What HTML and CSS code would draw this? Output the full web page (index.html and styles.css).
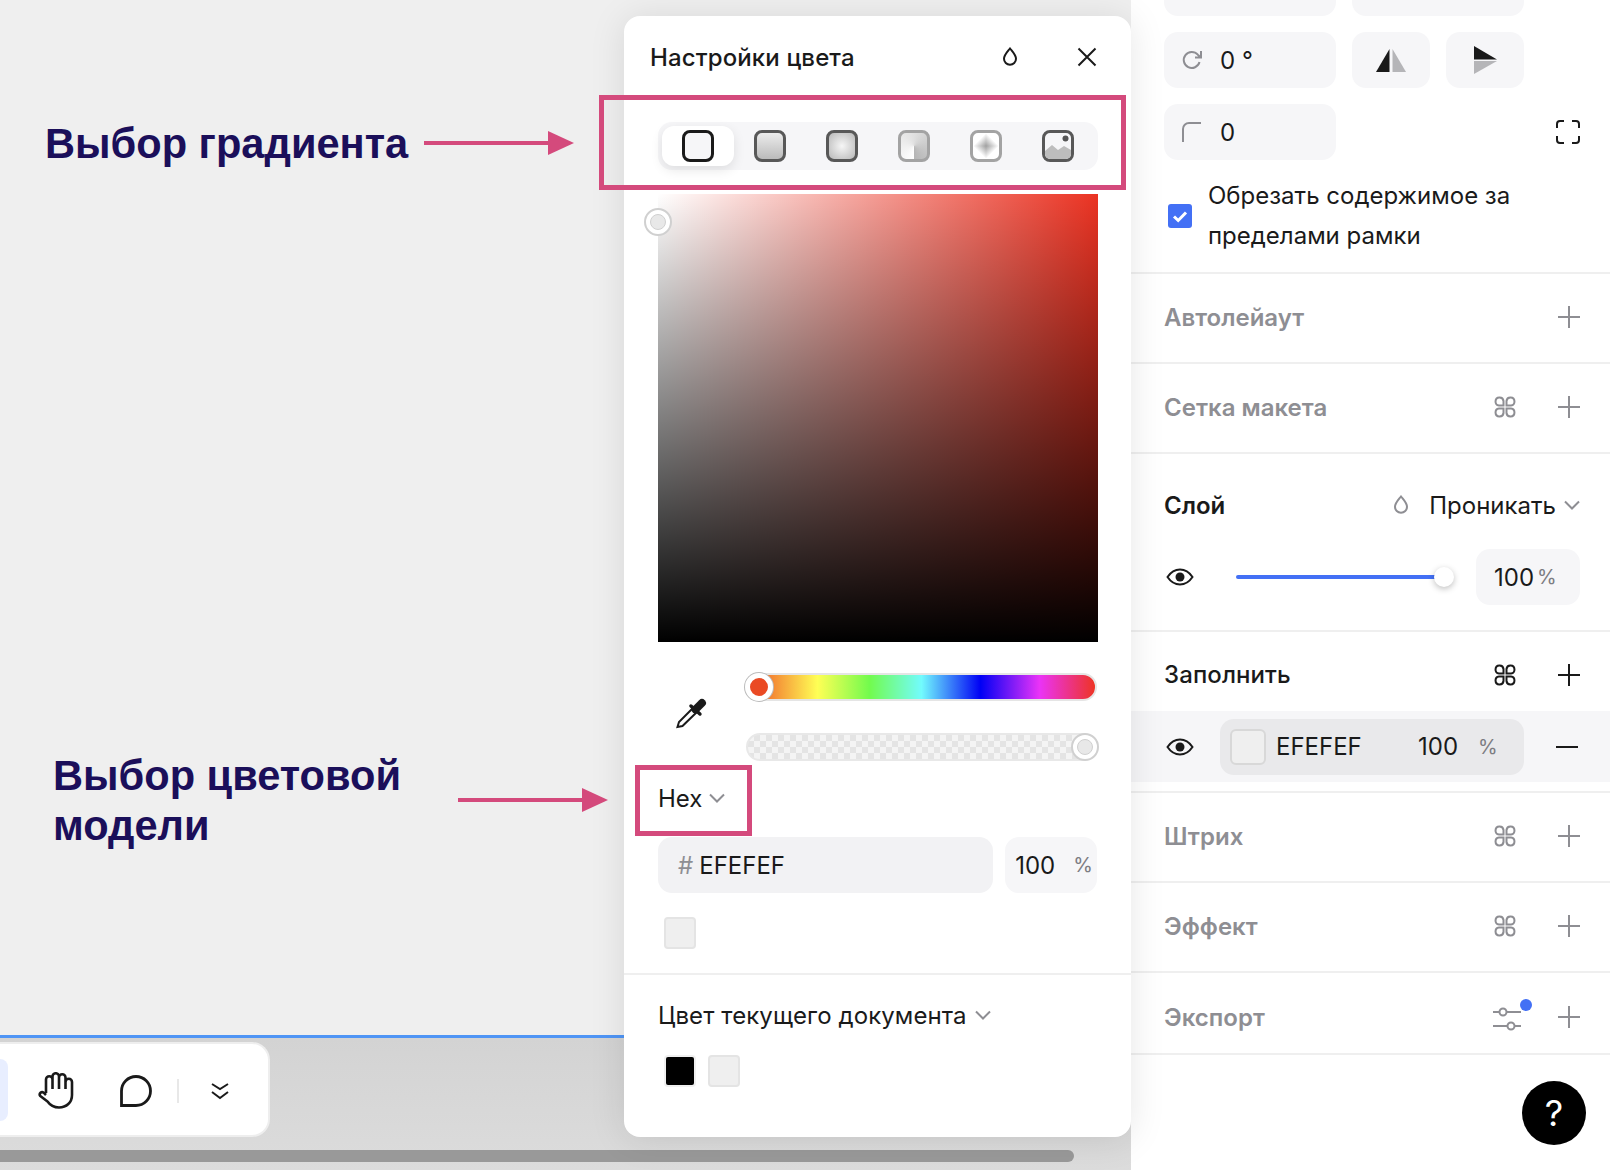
FILE: index.html
```html
<!DOCTYPE html>
<html lang="ru">
<head>
    <meta charset="UTF-8">
    <meta name="viewport" content="width=device-width, initial-scale=1.0">
    <title>Настройки цвета</title>
    <link rel="stylesheet" href="styles.css">
</head>
<body>
    <svg class="icon-defs" width="0" height="0">
        <symbol id="i-plus" viewBox="0 0 22 22"><path d="M11 0v22M0 11h22" fill="none" stroke="currentColor" stroke-width="2"/></symbol>
        <symbol id="i-cmd" viewBox="0 0 22 22"><g fill="none" stroke="currentColor" stroke-width="2"><path d="M9.500 9.500H5a4 4 0 1 1 4.500-4.500z"/><path d="M12.500 9.500H17a4 4 0 1 0-4.500-4.500z"/><path d="M9.500 12.500H5a4 4 0 1 0 4.500 4.500z"/><path d="M12.500 12.500H17a4 4 0 1 1-4.500 4.500z"/></g></symbol>
        <symbol id="i-eye" viewBox="0 0 28 18"><path d="M1.500 9C5 3.800 9 1.500 14 1.500S23 3.800 26.500 9C23 14.200 19 16.500 14 16.500S5 14.200 1.500 9z" fill="none" stroke="currentColor" stroke-width="2"/><circle cx="14" cy="9" r="4.500" fill="currentColor"/></symbol>
        <symbol id="i-chevron" viewBox="0 0 16 10"><path d="M1 1.500l7 7 7-7" fill="none" stroke="currentColor" stroke-width="2"/></symbol>
        <symbol id="i-drop" viewBox="0 0 16 20"><path d="M8 1.500c3 3.800 6 6.600 6 10.300a6 6 0 0 1-12 0C2 8.100 5 5.300 8 1.500z" fill="none" stroke="currentColor" stroke-width="2"/></symbol>
    </svg>

    <div class="stage">
        <div class="canvas-col">
            <div class="canvas"></div>
            <div class="bottom-area">
                <div class="toolbar">
                    <span class="tool-active"></span>
                    <svg class="tool-hand" viewBox="0 0 36 37" width="36" height="37"><path d="M8 21V7.500a3.250 3.250 0 0 1 6.500 0V4.500a3.250 3.250 0 0 1 6.500 0V5.500a3.250 3.250 0 0 1 6.500 0V10a3.250 3.250 0 0 1 6.500 0V23c0 7.500-5.500 12.500-13 12.500-5.500 0-9-2.500-11.500-6L2.300 24c-1.800-2.400 1.200-5 3.400-3.300L8 23M14.500 7.500V17M21 5.500V17M27.500 6V17" fill="none" stroke="#1a1a1a" stroke-width="2.600" stroke-linejoin="round"/></svg>
                    <svg class="tool-comment" viewBox="0 0 32 32" width="32" height="32"><path d="M1.500 30.500V16a14.500 14.500 0 1 1 14.500 14.500z" fill="none" stroke="#1a1a1a" stroke-width="2.800"/></svg>
                    <span class="tool-sep"></span>
                    <svg class="tool-more" viewBox="0 0 20 18" width="20" height="18"><path d="M2 2l8 5 8-5M2 10l8 6 8-6" fill="none" stroke="#1a1a1a" stroke-width="2"/></svg>
                </div>
                <div class="scrollbar"></div>
            </div>
        </div>

        <aside class="sidebar">
            <div class="props">
                <div class="prop-row prop-row-cut">
                    <div class="field field-wide"></div>
                    <div class="field field-wide"></div>
                </div>
                <div class="prop-row">
                    <div class="field field-wide">
                        <svg class="field-icon" viewBox="0 0 22 22" width="22" height="22"><path d="M18.500 13a8 8 0 1 1-1.700-7.300L20 8.500M20 2v6.500h-6" fill="none" stroke="#8e8e93" stroke-width="2"/></svg>
                        <span>0 °</span>
                    </div>
                    <div class="field field-btn">
                        <svg viewBox="0 0 30 24" width="30" height="24"><path d="M13.500 1L0 24h13.500z" fill="#1a1a1a"/><path d="M16.500 1L30 24H16.500z" fill="#b5b5b8"/></svg>
                    </div>
                    <div class="field field-btn">
                        <svg viewBox="0 0 24 30" width="24" height="30"><path d="M1 1l23 13.500H1z" fill="#1a1a1a"/><path d="M1 29l23-13H1z" fill="#b5b5b8"/></svg>
                    </div>
                </div>
                <div class="prop-row prop-row-last">
                    <div class="field field-wide">
                        <svg class="field-icon" viewBox="0 0 22 22" width="22" height="22"><path d="M2 21V8a6 6 0 0 1 6-6h12" fill="none" stroke="#8e8e93" stroke-width="2"/></svg>
                        <span>0</span>
                    </div>
                    <svg class="corners" viewBox="0 0 24 24" width="24" height="24"><path d="M1 8V4a3 3 0 0 1 3-3h4M16 1h4a3 3 0 0 1 3 3v4M23 16v4a3 3 0 0 1-3 3h-4M8 23H4a3 3 0 0 1-3-3v-4" fill="none" stroke="#1a1a1a" stroke-width="2"/></svg>
                </div>
                <div class="clip-row">
                    <span class="checkbox"><svg viewBox="0 0 24 24" width="24" height="24"><path d="M6 12.500l4.200 4L18 8.500" fill="none" stroke="#fff" stroke-width="3"/></svg></span>
                    <span class="clip-text">Обрезать содержимое за пределами рамки</span>
                </div>
            </div>

            <section class="section section-muted section-auto">
                <h4>Автолейаут</h4>
                <div class="section-icons"><svg class="ico-plus"><use href="#i-plus"/></svg></div>
            </section>
            <section class="section section-muted section-grid">
                <h4>Сетка макета</h4>
                <div class="section-icons"><svg class="ico-cmd"><use href="#i-cmd"/></svg><svg class="ico-plus"><use href="#i-plus"/></svg></div>
            </section>

            <section class="layer">
                <div class="layer-head">
                    <h4>Слой</h4>
                    <div class="blend">
                        <svg class="blend-drop"><use href="#i-drop"/></svg>
                        <span>Проникать</span>
                        <svg class="chevron"><use href="#i-chevron"/></svg>
                    </div>
                </div>
                <div class="layer-body">
                    <svg class="ico-eye"><use href="#i-eye"/></svg>
                    <div class="slider"><span class="slider-thumb"></span></div>
                    <div class="field field-opacity">100<small>%</small></div>
                </div>
            </section>

            <section class="fill">
                <div class="fill-head">
                    <h4>Заполнить</h4>
                    <div class="section-icons"><svg class="ico-cmd"><use href="#i-cmd"/></svg><svg class="ico-plus"><use href="#i-plus"/></svg></div>
                </div>
                <div class="fill-row">
                    <svg class="ico-eye"><use href="#i-eye"/></svg>
                    <div class="fill-pill">
                        <span class="fill-swatch"></span>
                        <span class="fill-hex">EFEFEF</span>
                        <span class="fill-num">100</span>
                        <small>%</small>
                    </div>
                    <span class="minus"></span>
                </div>
            </section>

            <section class="section section-muted section-stroke">
                <h4>Штрих</h4>
                <div class="section-icons"><svg class="ico-cmd"><use href="#i-cmd"/></svg><svg class="ico-plus"><use href="#i-plus"/></svg></div>
            </section>
            <section class="section section-muted section-effect">
                <h4>Эффект</h4>
                <div class="section-icons"><svg class="ico-cmd"><use href="#i-cmd"/></svg><svg class="ico-plus"><use href="#i-plus"/></svg></div>
            </section>
            <section class="section section-muted section-export">
                <h4>Экспорт</h4>
                <div class="section-icons">
                    <span class="tune">
                        <svg viewBox="0 0 28 28" width="28" height="28"><g fill="none" stroke="#8e8e93" stroke-width="2"><path d="M0 9h6M14 9h14M0 23h14M22 23h6"/><circle cx="10" cy="9" r="3.500"/><circle cx="18" cy="23" r="3.500"/></g></svg>
                        <span class="tune-dot"></span>
                    </span>
                    <svg class="ico-plus"><use href="#i-plus"/></svg>
                </div>
            </section>
            <div class="help">?</div>
        </aside>
    </div>

    <!-- color popup -->
    <div class="color-panel">
        <div class="panel-head">
            <span>Настройки цвета</span>
            <div class="panel-head-icons">
                <svg class="head-drop"><use href="#i-drop"/></svg>
                <svg viewBox="0 0 20 20" width="20" height="20"><path d="M1.500 1.500l17 17M18.500 1.500l-17 17" fill="none" stroke="#1a1a1a" stroke-width="2"/></svg>
            </div>
        </div>
        <div class="fill-types">
            <span class="fill-type fill-type-on"><i class="ft ft-solid"></i></span>
            <span class="fill-type"><i class="ft ft-linear"></i></span>
            <span class="fill-type"><i class="ft ft-radial"></i></span>
            <span class="fill-type"><i class="ft ft-angular"></i></span>
            <span class="fill-type"><i class="ft ft-diamond"></i></span>
            <span class="fill-type">
                <i class="ft ft-image">
                    <svg viewBox="0 0 26 26" width="26" height="26"><path d="M0 26V18l7-6 6 5 6-4 7 4v9z" fill="#bdbdbd"/><circle cx="20.500" cy="5.500" r="3" fill="#555"/></svg>
                </i>
            </span>
        </div>
        <div class="sv-field"><span class="sv-handle"><i></i></span></div>
        <div class="sliders">
            <svg class="dropper" viewBox="0 0 32 32" width="32" height="32"><path d="M17 11L3 25l-1.500 5 5-1L21 15" fill="none" stroke="#1a1a1a" stroke-width="2"/><path d="M15 9l9 8" stroke="#1a1a1a" stroke-width="3.500" stroke-linecap="round"/><path d="M19.500 12.500L26 6" stroke="#1a1a1a" stroke-width="8" stroke-linecap="round"/></svg>
            <div class="slider-stack">
                <div class="hue"><span class="hue-thumb"></span></div>
                <div class="alpha"><span class="alpha-thumb"><i></i></span></div>
            </div>
        </div>
        <div class="model">Hex <svg class="chevron"><use href="#i-chevron"/></svg></div>
        <div class="hex-row">
            <div class="hex-input"><span class="hash">#</span>EFEFEF</div>
            <div class="hex-alpha">100<small>%</small></div>
        </div>
        <div class="swatches swatches-recent"><span class="swatch swatch-light"></span></div>
        <div class="doc-colors">
            <div class="doc-title">Цвет текущего документа <svg class="chevron"><use href="#i-chevron"/></svg></div>
            <div class="swatches">
                <span class="swatch swatch-black"></span>
                <span class="swatch swatch-light"></span>
            </div>
        </div>
    </div>

    <!-- annotations drawn on top of the screenshot -->
    <div class="note note-gradient">Выбор градиента</div>
    <div class="note note-model">Выбор цветовой<br>модели</div>
    <svg class="arrow arrow-gradient" viewBox="0 0 150 28" width="150" height="28"><path d="M0 14h128" stroke="#d44a7c" stroke-width="4"/><path d="M124 2l26 12-26 12z" fill="#d44a7c"/></svg>
    <svg class="arrow arrow-model" viewBox="0 0 150 28" width="150" height="28"><path d="M0 14h128" stroke="#d44a7c" stroke-width="4"/><path d="M124 2l26 12-26 12z" fill="#d44a7c"/></svg>
    <div class="mark mark-gradient"></div>
    <div class="mark mark-model"></div>
</body>
</html>
```

FILE: styles.css
```css
* {
    margin: 0;
    padding: 0;
    box-sizing: border-box;
}

html, body {
    width: 1610px;
    height: 1170px;
    overflow: hidden;
}

body {
    position: relative;
    font-family: Inter, "Noto Sans", sans-serif;
    font-size: 24px;
    color: #1a1a1a;
    background-color: #efefef;
}

.icon-defs {
    position: absolute;
}

.stage {
    display: flex;
    height: 1170px;
}

/* canvas side */
.canvas-col {
    width: 1131px;
    display: flex;
    flex-direction: column;
}

.canvas {
    height: 1035px;
    background-color: #efefef;
}

.bottom-area {
    flex: 1;
    border-top: 3px solid #4f95f5;
    background: linear-gradient(#d3d3d3, #dcdcdc);
    padding-top: 4px;
}

.toolbar {
    width: 270px;
    height: 95px;
    background-color: white;
    border: 2px solid #eeeeee;
    border-left: 0;
    border-radius: 0 18px 18px 0;
    display: flex;
    align-items: center;
    position: relative;
}

.tool-active {
    width: 8px;
    height: 62px;
    background-color: #e8eeff;
    border-radius: 0 10px 10px 0;
}

.tool-hand {
    margin-left: 30px;
    margin-top: 2px;
}

.tool-comment {
    margin-left: 46px;
    margin-top: 3px;
}

.tool-sep {
    width: 2px;
    height: 24px;
    margin-left: 25px;
    margin-top: 2px;
    background-color: #e8e8e8;
}

.tool-more {
    margin-left: 31px;
    margin-top: 3px;
}

.scrollbar {
    width: 1074px;
    height: 12px;
    margin-top: 13px;
    background-color: #999999;
    border-radius: 0 6px 6px 0;
}

/* right panel */
.sidebar {
    width: 479px;
    background-color: white;
    position: relative;
}

.props {
    padding: 0 30px 0 33px;
    height: 272px;
}

.prop-row {
    display: flex;
    gap: 16px;
    margin-bottom: 16px;
}

.prop-row-cut {
    height: 16px;
    overflow: hidden;
}

.prop-row-cut .field {
    margin-top: -40px;
}

.prop-row-last {
    justify-content: space-between;
    align-items: center;
}

.field {
    height: 56px;
    background-color: #f6f6f8;
    border-radius: 14px;
    display: flex;
    align-items: center;
}

.field-wide {
    width: 172px;
    padding-left: 17px;
    gap: 17px;
}

.field-btn {
    width: 78px;
    justify-content: center;
}

.clip-row {
    display: flex;
    align-items: center;
    gap: 16px;
    padding-left: 4px;
    line-height: 40px;
}

.checkbox {
    flex: none;
    width: 24px;
    height: 24px;
    border-radius: 3px;
    background-color: #4370f5;
    display: flex;
}

.clip-text {
    width: 330px;
}

.section {
    display: flex;
    justify-content: space-between;
    align-items: center;
    padding: 0 30px 2px 33px;
    border-top: 2px solid #efefef;
}

h4 {
    font-size: 24px;
    font-weight: 600;
}

.section-muted {
    color: #8e8e93;
}

.section-auto,
.section-grid,
.section-stroke,
.section-effect {
    height: 90px;
}

.section-export {
    height: 84px;
    padding-top: 8px;
    padding-bottom: 0;
    border-bottom: 2px solid #efefef;
}

.section-icons {
    display: flex;
    align-items: center;
    gap: 42px;
}

.ico-plus {
    width: 22px;
    height: 22px;
}

.ico-cmd {
    width: 22px;
    height: 22px;
}

.ico-eye {
    width: 28px;
    height: 18px;
    color: #1a1a1a;
}

.chevron {
    width: 16px;
    height: 10px;
    color: #8e8e93;
}

.layer {
    height: 178px;
    border-top: 2px solid #efefef;
    padding: 0 30px 0 33px;
}

.layer-head {
    height: 102px;
    display: flex;
    justify-content: space-between;
    align-items: center;
}

.blend {
    display: flex;
    align-items: center;
    font-weight: 400;
}

.blend-drop {
    width: 16px;
    height: 20px;
    color: #8e8e93;
    margin-right: 20px;
}

.blend .chevron {
    margin-left: 8px;
}

.layer-body {
    display: flex;
    align-items: center;
    margin-top: -7px;
}

.layer-body .ico-eye {
    margin-left: 2px;
}

.slider {
    width: 208px;
    height: 4px;
    margin-left: 42px;
    background-color: #4370f5;
    border-radius: 2px;
    position: relative;
}

.slider-thumb {
    position: absolute;
    right: -10px;
    top: -8px;
    width: 20px;
    height: 20px;
    border-radius: 50%;
    background-color: white;
    box-shadow: 0 2px 6px rgba(0, 0, 0, 0.25);
}

.field-opacity {
    width: 104px;
    margin-left: auto;
    padding-left: 18px;
    gap: 3px;
}

small {
    font-size: 20px;
    color: #7c7c82;
}

.fill {
    height: 161px;
    border-top: 2px solid #efefef;
}

.fill-head {
    height: 79px;
    display: flex;
    justify-content: space-between;
    align-items: center;
    padding: 6px 30px 0 33px;
}

.fill-head h4 {
    font-weight: 500;
    letter-spacing: 0.1px;
}

.fill-row {
    height: 71px;
    display: flex;
    align-items: center;
    padding-left: 35px;
    background-color: #f6f6f8;
}

.fill-pill {
    width: 304px;
    height: 56px;
    margin-left: 26px;
    background-color: #e9e9eb;
    border-radius: 14px;
    display: flex;
    align-items: center;
    padding-left: 10px;
}

.fill-swatch {
    width: 36px;
    height: 36px;
    background-color: #efefef;
    border: 2px solid #d8d8d8;
    border-radius: 6px;
}

.fill-hex {
    margin-left: 10px;
    width: 142px;
}

.fill-num {
    width: 60px;
}

.minus {
    width: 22px;
    height: 2px;
    margin-left: 32px;
    background-color: #1a1a1a;
}

.tune {
    position: relative;
    width: 28px;
    height: 28px;
    display: block;
    margin-right: -5px;
}

.tune-dot {
    position: absolute;
    top: -4px;
    right: -11px;
    width: 12px;
    height: 12px;
    border-radius: 50%;
    background-color: #4370f5;
}

.help {
    position: absolute;
    left: 391px;
    top: 1081px;
    width: 64px;
    height: 64px;
    border-radius: 50%;
    background-color: black;
    color: white;
    font-size: 36px;
    font-weight: 400;
    display: flex;
    align-items: center;
    justify-content: center;
}

/* color popup */
.color-panel {
    position: absolute;
    left: 624px;
    top: 16px;
    width: 507px;
    height: 1121px;
    background-color: white;
    border-radius: 16px;
    box-shadow: 0 2px 36px rgba(0, 0, 0, 0.1);
    padding: 0 34px;
}

.panel-head {
    height: 82px;
    margin: 0 0 0 -8px;
    display: flex;
    justify-content: space-between;
    align-items: center;
    font-weight: 500;
    letter-spacing: 0.13px;
}

.panel-head-icons {
    display: flex;
    align-items: center;
    gap: 59px;
}

.head-drop {
    width: 16px;
    height: 20px;
    color: #1a1a1a;
}

.fill-types {
    width: 440px;
    height: 48px;
    margin-top: 24px;
    background-color: #f6f6f8;
    border-radius: 14px;
    padding: 4px;
    display: flex;
}

.fill-type {
    width: 72px;
    height: 40px;
    display: flex;
    align-items: center;
    justify-content: center;
    border-radius: 12px;
}

.fill-type-on {
    background-color: white;
    box-shadow: 0 4px 12px rgba(0, 0, 0, 0.1);
}

.ft {
    display: block;
    width: 32px;
    height: 32px;
    border: 3px solid #585858;
    border-radius: 8px;
    overflow: hidden;
}

.ft-solid {
    border-color: #1a1a1a;
    background-color: #f6f6f8;
}

.ft-linear {
    background: linear-gradient(#ececec, #bbbbbb);
}

.ft-radial {
    background: radial-gradient(circle, #f6f6f6, #b8b8b8);
}

.ft-angular {
    border-color: #a3a3a3;
    background: conic-gradient(from 180deg, white, #e0e0e0 50%, #b5b5b5);
}

.ft-diamond {
    border-color: #a3a3a3;
    background-color: white;
    background-image:
        linear-gradient(to bottom right, white 50%, #a0a0a0),
        linear-gradient(to bottom left, white 50%, #a0a0a0),
        linear-gradient(to top right, white 50%, #a0a0a0),
        linear-gradient(to top left, white 50%, #a0a0a0);
    background-size: 50% 50%;
    background-repeat: no-repeat;
    background-position: 0 0, 100% 0, 0 100%, 100% 100%;
}

.ft-image {
    background-color: #f6f6f8;
}

.ft-image svg {
    display: block;
}

.sv-field {
    width: 440px;
    height: 448px;
    margin-top: 24px;
    position: relative;
    background-color: #eb3323;
    background-image: linear-gradient(transparent, black), linear-gradient(to right, white, rgba(255, 255, 255, 0));
}

.sv-handle,
.alpha-thumb {
    position: absolute;
    width: 28px;
    height: 28px;
    border-radius: 50%;
    background-color: white;
    border: 2px solid #d0d0d0;
    display: flex;
    align-items: center;
    justify-content: center;
}

.sv-handle {
    left: -14px;
    top: 14px;
}

.sv-handle i,
.alpha-thumb i {
    width: 16px;
    height: 16px;
    border-radius: 50%;
    background-color: #e8e8e8;
    border: 1px solid #d0d0d0;
}

.sliders {
    display: flex;
    align-items: center;
    margin-top: 31px;
}

.dropper {
    margin-left: 18px;
    margin-top: -8px;
}

.slider-stack {
    margin-left: 38px;
    width: 352px;
}

.hue {
    height: 28px;
    border: 2px solid #e5e5e5;
    border-radius: 14px;
    position: relative;
    background-image: linear-gradient(to right, #ee4a24 0%, #ffff55 20%, #72fb4d 35%, #72fbfd 50%, #0000f5 67%, #ea33f7 84%, #ee3424 100%);
}

.hue-thumb {
    position: absolute;
    left: -3px;
    top: -2px;
    width: 28px;
    height: 28px;
    border-radius: 50%;
    background-color: #ea4a24;
    border: 5px solid white;
    box-shadow: 0 0 0 1px #bbbbbb;
}

.alpha {
    height: 28px;
    margin-top: 32px;
    border: 2px solid #e8e8e8;
    border-radius: 14px;
    position: relative;
    background-color: #f4f4f4;
    background-image: linear-gradient(45deg, #e4e4e4 25%, transparent 25%, transparent 75%, #e4e4e4 75%), linear-gradient(45deg, #e4e4e4 25%, transparent 25%, transparent 75%, #e4e4e4 75%);
    background-size: 12px 12px;
    background-position: 0 0, 6px 6px;
}

.alpha-thumb {
    right: -4px;
    top: -2px;
}

.model {
    height: 72px;
    margin: 1px 0 3px;
    display: flex;
    align-items: center;
    gap: 7px;
}

.hex-row {
    display: flex;
    gap: 12px;
    height: 56px;
}

.hex-input,
.hex-alpha {
    height: 56px;
    display: flex;
    align-items: center;
    border-radius: 14px;
}

.hex-input {
    width: 336px;
    padding-left: 20px;
    background-color: #f2f2f4;
}

.hash {
    color: #8e8e93;
    margin-right: 6px;
}

.hex-alpha {
    width: 92px;
    padding-left: 10px;
    justify-content: space-between;
    padding-right: 4px;
    background-color: #f6f6f8;
}

.swatches {
    display: flex;
    gap: 12px;
    padding-left: 6px;
}

.swatches-recent {
    margin-top: 24px;
}

.swatch {
    width: 32px;
    height: 32px;
    border-radius: 4px;
    border: 2px solid #e4e4e4;
}

.swatch-light {
    background-color: #efefef;
}

.swatch-black {
    background-color: black;
    border-color: #f0f0f0;
}

.doc-colors {
    margin: 24px -34px 0;
    padding: 0 34px;
    border-top: 2px solid #efefef;
}

.doc-title {
    height: 80px;
    display: flex;
    align-items: center;
    gap: 8px;
    letter-spacing: 0.1px;
}

/* annotations */
.note {
    position: absolute;
    font-family: "Liberation Sans", Arial, sans-serif;
    font-weight: 700;
    font-size: 41.6px;
    line-height: 50px;
    color: #1b0f5a;
}

.note-gradient {
    left: 45px;
    top: 119px;
}

.note-model {
    left: 53px;
    top: 751px;
}

.arrow {
    position: absolute;
}

.arrow-gradient {
    left: 424px;
    top: 129px;
}

.arrow-model {
    left: 458px;
    top: 786px;
}

.mark {
    position: absolute;
    border: 5px solid #d44a7c;
}

.mark-gradient {
    left: 599px;
    top: 95px;
    width: 527px;
    height: 95px;
}

.mark-model {
    left: 635px;
    top: 765px;
    width: 117px;
    height: 71px;
}
```
